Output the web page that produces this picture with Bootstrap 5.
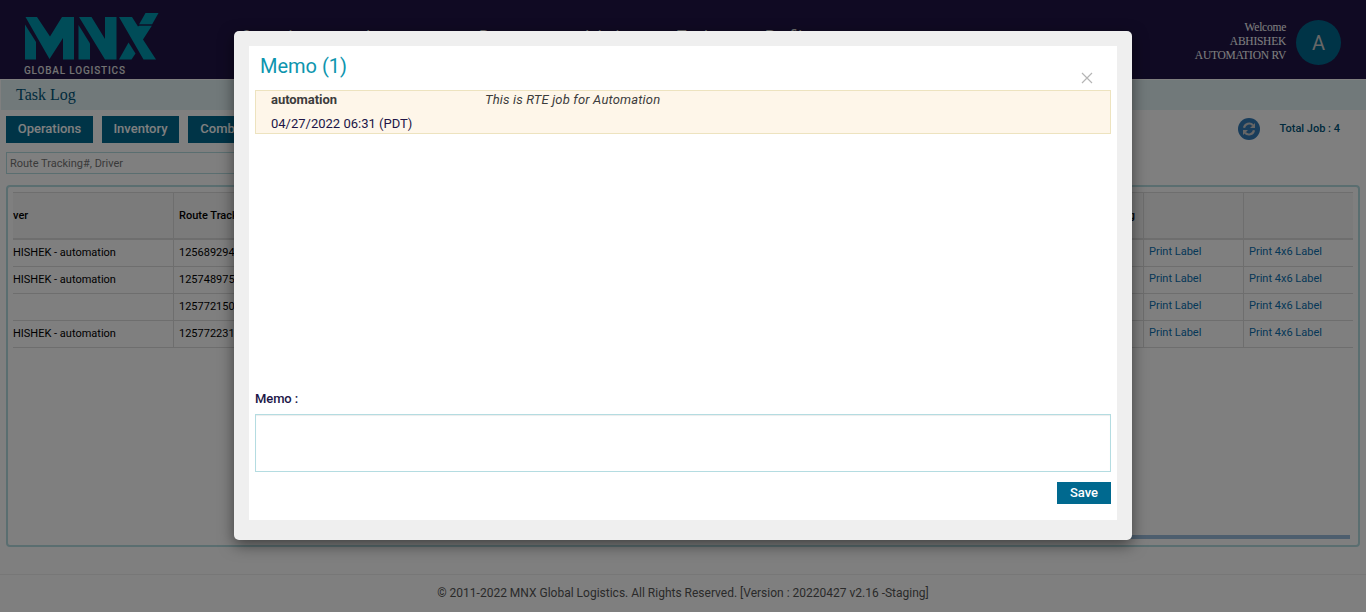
<!DOCTYPE html>
<html lang="en">
<head>
<meta charset="utf-8">
<meta name="viewport" content="width=device-width, initial-scale=1">
<title>Task Log</title>
<link href="https://cdn.jsdelivr.net/npm/bootstrap@5.3.0/dist/css/bootstrap.min.css" rel="stylesheet">
<style>
body{font-family:Roboto,sans-serif;font-size:13px;line-height:1.4;color:#000;height:612px;overflow:hidden;background:#fff}
.topbar{height:79px;background:#201547;color:#fff}
.logo{margin:13px 0 0 24px}
.main-menu{font-size:16px;line-height:20px;margin:27px 0 0 81px;color:#ddd}
.main-menu span{white-space:nowrap}
.m1{width:122px}.m2{width:116px}.m3{width:103px}.m4{width:95px}.m5{width:88px}
.welcome{font:11.500px/14px "Liberation Serif",serif;letter-spacing:-.25px;width:110px;margin:20px 10px 0 0}
.avatar{width:45px;height:45px;background:#00698f;color:#cfcfcf;font-size:20px;margin:20px 25px 0 0}
.titlebar{height:30px;margin:1px 0 0 1px;background:#e2f2f5;font:16px/30px "Liberation Serif",serif;color:#00557a;padding-left:15px}
.toolrow{height:27px;margin:6px 0 0 6px;gap:9px}
.btn-task{background:#00698f;color:#fff;border:0;border-radius:0;font-size:13px;font-weight:500;line-height:25px;padding:0 0 2px;height:27px}
.w-ops{width:87px}.w-inv{width:77px}.w-comb{width:84px}
.refresh{margin-top:2px}
.total{color:#00557a;font-size:11px;font-weight:500;line-height:26px;margin:0 26px 0 11px}
.searchbox{margin:9px 0 0 6px;width:400px;height:22px;border:1px solid #b4dce1;color:#757575;font-size:11px;line-height:21px;padding-left:3px}
.grid-panel{margin:11px 6px 0;height:362px;border:2px solid #b4dce1;border-radius:4px;padding:5px 5px 0}
.jobs{table-layout:fixed;width:1340px;font-size:11px;border-collapse:separate;border-spacing:0}
.jobs th,.jobs td{border-bottom:1px solid #ddd;border-right:1px solid #ddd;padding:0 5px;white-space:nowrap;overflow:hidden;height:27px;line-height:16px}
.jobs th{height:48px;background:#f7f7f7;border-top:1px solid #ddd;border-bottom:2px solid #ddd;font-weight:500}
.jobs th:first-child,.jobs td:first-child{padding-left:0}
.jobs th:last-child,.jobs td:last-child{border-right:0}
.jobs a{display:block;color:#0a70b0;text-decoration:none;padding-bottom:2px}
.hscroll{height:4px;width:600px;margin:187px 3px 0 auto;background:#9abddd}
.foot{margin-top:27px;height:38px;border-top:1px solid #eee;font-size:12px;line-height:36px;color:#555}
.veil{inset:0;background:rgba(0,0,0,.5)}
.memo-box{left:234px;top:31px;width:898px;height:509px;background:#efefef;border-radius:5px;box-shadow:0 5px 15px rgba(0,0,0,.5);padding:15px 15px 20px}
.memo-inner{height:474px;background:#fff;padding:0 6px}
.memo-title{font-size:20px;line-height:40px;height:44px;color:#0d95ae;padding-left:5px}
.close-x{margin:25.500px 18px 0 0}
.memo-item{height:44px;border:1px solid #ede3bf;background:#fef6e9;padding-left:15px;color:#3c3c3c;line-height:18px}
.memo-author{width:214px;letter-spacing:-.05px}
.memo-note{letter-spacing:.17px}
.memo-date{color:#201547;margin-top:6px}
.memo-label{margin-top:256px;line-height:18px;font-weight:500;color:#201547;letter-spacing:-.1px}
.memo-text{margin-top:6px;height:58px;border:1px solid #b4dce1;border-radius:0;box-shadow:inset 0 1px 1px rgba(0,0,0,.075);resize:none;display:block}
.btn-save{width:54px;height:22px;line-height:22px;margin-top:10px}
</style>
</head>
<body>
<header class="topbar d-flex align-items-start">
  <svg class="logo flex-shrink-0" width="136" height="64" viewBox="24 13 136 64">
    <g fill="#0099b0">
      <path d="M25.500 17H37L50 36.500 62 17h12v42.500H63V38L49.500 59z"/>
      <path d="M25 24.500L36 42v17.500H25z"/>
      <path d="M79 17h12.500L105 39V17h11.500v42.500H105z"/>
      <path d="M78.500 25L90 43.500v16H78.500z"/>
      <path d="M119 17h13l6 9.500 1.500-1H152L143 39.500l13 20h-12.500z"/>
      <path d="M145.500 13h13L152 24.500h-13z"/>
      <path d="M128.500 42.500L135.500 53.500 131.500 59.500H119z"/>
    </g>
    <path d="M138.500 25h14" stroke="#201547" stroke-width=".8"/>
    <text x="24" y="74" fill="#e4e4e4" font-family="Roboto" font-weight="500" font-size="10" textLength="101" lengthAdjust="spacing">GLOBAL LOGISTICS</text>
  </svg>
  <nav class="main-menu d-flex flex-grow-1"><span class="m1">Operations</span><span class="m2">Accounts</span><span class="m3">Reports</span><span class="m4">Admin</span><span class="m5">Tools</span><span>Profile</span></nav>
  <div class="welcome text-end">Welcome<br>ABHISHEK<br>AUTOMATION RV</div>
  <div class="avatar rounded-circle d-flex align-items-center justify-content-center">A</div>
</header>
<div class="titlebar">Task Log</div>
<div class="toolrow d-flex">
  <button class="btn-task w-ops">Operations</button>
  <button class="btn-task w-inv">Inventory</button>
  <button class="btn-task w-comb">Combined</button>
  <svg class="refresh ms-auto flex-shrink-0" width="22" height="22" viewBox="0 0 22 22"><circle cx="11" cy="11" r="11" fill="#337ab7"/><g fill="none" stroke="#ccc" stroke-width="2.200"><path d="M6 9.800A5.200 5.200 0 0 1 15 7.300M16 12.200A5.200 5.200 0 0 1 7 14.700"/></g><path d="M17 5v5h-5zM5 17v-5h5z" fill="#ccc"/></svg>
  <div class="total">Total Job : 4</div>
</div>
<div class="searchbox">Route Tracking#, Driver</div>
<main class="grid-panel">
  <table class="jobs">
    <colgroup><col style="width:161px"><col style="width:120px"><col><col style="width:100px"><col style="width:109px"></colgroup>
    <thead><tr><th>ver</th><th>Route Tracking#</th><th class="text-end pe-2">Tracking</th><th></th><th></th></tr></thead>
    <tbody>
      <tr><td>HISHEK - automation</td><td>1256892941</td><td></td><td><a href="#">Print Label</a></td><td><a href="#">Print 4x6 Label</a></td></tr>
      <tr><td>HISHEK - automation</td><td>1257489752</td><td></td><td><a href="#">Print Label</a></td><td><a href="#">Print 4x6 Label</a></td></tr>
      <tr><td></td><td>1257721503</td><td></td><td><a href="#">Print Label</a></td><td><a href="#">Print 4x6 Label</a></td></tr>
      <tr><td>HISHEK - automation</td><td>1257722314</td><td></td><td><a href="#">Print Label</a></td><td><a href="#">Print 4x6 Label</a></td></tr>
    </tbody>
  </table>
  <div class="hscroll"></div>
</main>
<footer class="foot text-center">© 2011-2022 MNX Global Logistics. All Rights Reserved. [Version : 20220427 v2.16 -Staging]</footer>

<div class="veil position-absolute">
  <section class="memo-box position-absolute" role="dialog">
    <div class="memo-inner">
      <div class="memo-title d-flex justify-content-between">
        <span>Memo (1)</span>
        <svg class="close-x" width="12" height="12" viewBox="0 0 12 12"><path d="M1 1l10 10M11 1L1 11" stroke="#b5b5b5" stroke-width="1.200"/></svg>
      </div>
      <div class="memo-item">
        <div class="d-flex"><b class="memo-author fw-bold">automation</b><i class="memo-note">This is RTE job for Automation</i></div>
        <div class="memo-date">04/27/2022 06:31 (PDT)</div>
      </div>
      <div class="memo-label">Memo :</div>
      <textarea class="memo-text form-control"></textarea>
      <div class="d-flex justify-content-end"><button class="btn-task btn-save">Save</button></div>
    </div>
  </section>
</div>
<script src="https://cdn.jsdelivr.net/npm/bootstrap@5.3.0/dist/js/bootstrap.bundle.min.js"></script>
</body>
</html>
